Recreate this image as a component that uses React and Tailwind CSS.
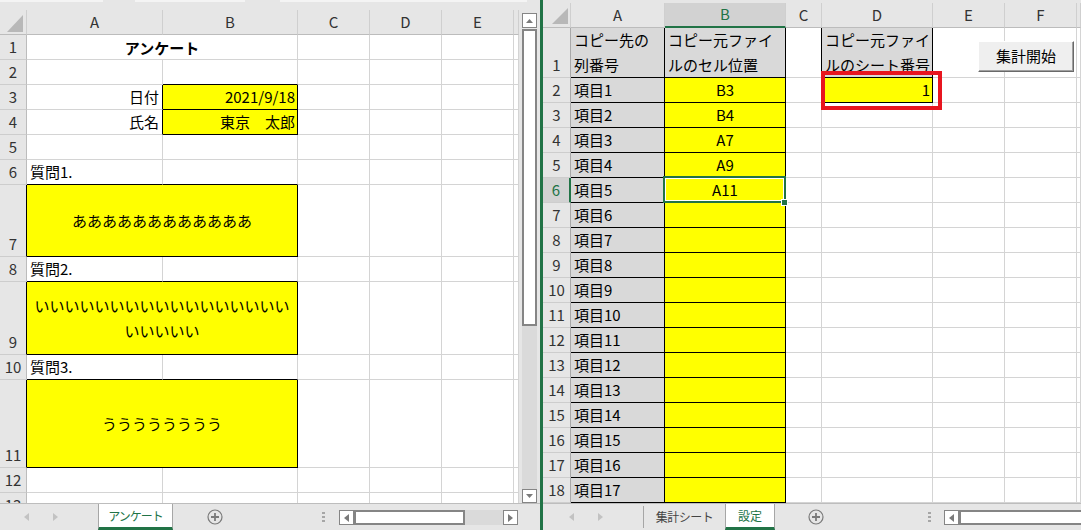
import React from "react";

const FONT = "font-['Noto_Sans_CJK_JP','Noto_Sans',sans-serif]";
const GR = "border-r-[#d4d4d4]";
const GB = "border-b-[#d4d4d4]";
const KR = "border-r-black";
const KB = "border-b-black";
const YEL = "bg-[#ffff00]";
const GRY = "bg-[#d9d9d9]";

// row header styles
const LH = "bg-[#e6e6e6] border-r border-r-[#bcbcbc] text-[#333]";
const LHK = "bg-[#e6e6e6] border-r border-r-black text-[#333]";
const RH = "bg-[#e6e6e6] border-r border-r-[#a8a8a8] text-[#333]";
const RHS = "bg-[#d2d2d2] border-r-2 border-r-[#217346] text-[#217346]";

function Cell({ cls = "", children }) {
  return (
    <div className={`shrink-0 flex border-r border-b text-[15px] leading-[25px] text-black whitespace-nowrap ${cls}`}>
      {children}
    </div>
  );
}

function RowHead({ w, n, cls }) {
  return (
    <div className={`shrink-0 flex items-end justify-center border-b border-b-[#cdcdcd] text-[15px] leading-[25px] ${w} ${cls}`}>
      {n}
    </div>
  );
}

function ColHead({ w, label, cls = "border-b border-b-[#bcbcbc] bg-[#e6e6e6] text-[#333]" }) {
  return (
    <div className={`shrink-0 flex items-center justify-center border-r border-r-[#cfcfcf] text-[15px] ${w} ${cls}`}>
      {label}
    </div>
  );
}

function Corner({ w, points }) {
  return (
    <div className={`shrink-0 bg-[#e6e6e6] border-r border-r-[#cfcfcf] border-b border-b-[#bcbcbc] ${w}`}>
      <svg width="28" height="24" viewBox="0 0 28 24">
        <polygon points={points} fill="#b8b8b8" />
      </svg>
    </div>
  );
}

function Tri({ dir, color = "#c2c2c2" }) {
  const pts = {
    left: "5,0 5,8 0,4",
    right: "0,0 0,8 5,4",
    up: "0,4 7,4 3.5,0",
    down: "0,0 7,0 3.5,4",
  }[dir];
  const vertical = dir === "up" || dir === "down";
  return (
    <svg width={vertical ? 7 : 5} height={vertical ? 4 : 8} viewBox={vertical ? "0 0 7 4" : "0 0 5 8"}>
      <polygon points={pts} fill={color} />
    </svg>
  );
}

function PlusCircle() {
  return (
    <svg width="16" height="16" viewBox="0 0 16 16">
      <circle cx="8" cy="8" r="7" fill="none" stroke="#7a7a7a" strokeWidth="1.2" />
      <path d="M8 4v8M4 8h8" stroke="#7a7a7a" strokeWidth="1.8" />
    </svg>
  );
}

function Dots() {
  return (
    <div className="flex flex-col gap-[2px]">
      <span className="w-[3px] h-[2px] bg-[#a6a6a6]" />
      <span className="w-[3px] h-[2px] bg-[#a6a6a6]" />
      <span className="w-[3px] h-[2px] bg-[#a6a6a6]" />
    </div>
  );
}

function LRow({ h, n, head = LH, children }) {
  return (
    <div className={`flex shrink-0 ${h}`}>
      <RowHead w="w-[27px]" n={n} cls={head} />
      {children}
    </div>
  );
}

function LTail() {
  return (
    <>
      <Cell cls={`w-[72px] ${GR} ${GB}`} />
      <Cell cls={`w-[72px] ${GR} ${GB}`} />
      <Cell cls={`w-[72px] ${GR} ${GB}`} />
      <Cell cls={`w-[5px] ${GR} ${GB}`} />
    </>
  );
}

function LeftWindow() {
  return (
    <div className="w-[540px] shrink-0 flex flex-col">
      <div className="h-[10px] shrink-0 bg-[#e6e6e6] flex items-start">
        <span className="w-[103px] h-[2px] bg-[#f4f4f4]" />
        <span className="w-[32px]" />
        <span className="w-[110px] h-[2px] bg-[#f4f4f4]" />
        <span className="w-[35px]" />
        <span className="w-[247px] h-[2px] bg-[#f4f4f4]" />
      </div>

      <div className="flex h-[493px] shrink-0">
        <div className="w-[519px] h-[493px] overflow-hidden flex flex-col bg-white">
          <div className="flex h-[25px] shrink-0">
            <Corner w="w-[27px]" points="7,22 23,5 23,22" />
            <ColHead w="w-[136px]" label="A" />
            <ColHead w="w-[135px]" label="B" />
            <ColHead w="w-[72px]" label="C" />
            <ColHead w="w-[72px]" label="D" />
            <ColHead w="w-[72px]" label="E" />
            <ColHead w="w-[5px]" label="" />
          </div>

          <LRow h="h-[25px]" n={1}>
            <Cell cls={`w-[271px] ${GR} ${GB} items-center justify-center font-bold`}>アンケート</Cell>
            <LTail />
          </LRow>
          <LRow h="h-[25px]" n={2}>
            <Cell cls={`w-[136px] ${GR} ${GB}`} />
            <Cell cls={`w-[135px] ${GR} ${KB}`} />
            <LTail />
          </LRow>
          <LRow h="h-[25px]" n={3}>
            <Cell cls={`w-[136px] ${KR} ${GB} justify-end items-end pr-[3px]`}>日付</Cell>
            <Cell cls={`w-[135px] ${KR} ${KB} ${YEL} justify-end items-end pr-[2px]`}>2021/9/18</Cell>
            <LTail />
          </LRow>
          <LRow h="h-[25px]" n={4}>
            <Cell cls={`w-[136px] ${KR} ${GB} justify-end items-end pr-[3px]`}>氏名</Cell>
            <Cell cls={`w-[135px] ${KR} ${KB} ${YEL} justify-end items-end pr-[2px]`}>東京　太郎</Cell>
            <LTail />
          </LRow>
          <LRow h="h-[25px]" n={5}>
            <Cell cls={`w-[136px] ${GR} ${GB}`} />
            <Cell cls={`w-[135px] ${GR} ${GB}`} />
            <LTail />
          </LRow>
          <LRow h="h-[25px]" n={6}>
            <Cell cls={`w-[136px] ${GR} ${KB} items-end pl-[3px]`}>質問1.</Cell>
            <Cell cls={`w-[135px] ${GR} ${KB}`} />
            <LTail />
          </LRow>
          <LRow h="h-[72px]" n={7} head={LHK}>
            <Cell cls={`w-[271px] ${KR} ${KB} ${YEL} items-center justify-center`}>ああああああああああああ</Cell>
            <LTail />
          </LRow>
          <LRow h="h-[25px]" n={8}>
            <Cell cls={`w-[136px] ${GR} ${KB} items-end pl-[3px]`}>質問2.</Cell>
            <Cell cls={`w-[135px] ${GR} ${KB}`} />
            <LTail />
          </LRow>
          <LRow h="h-[73px]" n={9} head={LHK}>
            <Cell cls={`w-[271px] ${KR} ${KB} ${YEL} flex-col items-center justify-center`}>
              <span>いいいいいいいいいいいいいいいいい</span>
              <span>いいいいい</span>
            </Cell>
            <LTail />
          </LRow>
          <LRow h="h-[25px]" n={10}>
            <Cell cls={`w-[136px] ${GR} ${KB} items-end pl-[3px]`}>質問3.</Cell>
            <Cell cls={`w-[135px] ${GR} ${KB}`} />
            <LTail />
          </LRow>
          <LRow h="h-[88px]" n={11} head={LHK}>
            <Cell cls={`w-[271px] ${KR} ${KB} ${YEL} items-center justify-center`}>うううううううう</Cell>
            <LTail />
          </LRow>
          <LRow h="h-[25px]" n={12}>
            <Cell cls={`w-[136px] ${GR} ${GB}`} />
            <Cell cls={`w-[135px] ${GR} ${GB}`} />
            <LTail />
          </LRow>
          <LRow h="h-[25px]" n={13}>
            <Cell cls={`w-[136px] ${GR} ${GB}`} />
            <Cell cls={`w-[135px] ${GR} ${GB}`} />
            <LTail />
          </LRow>
        </div>

        {/* vertical scrollbar */}
        <div className="w-[21px] shrink-0 bg-[#e6e6e6] flex flex-col pl-[3px] pr-[3px] pt-[3px]">
          <div className="h-[15px] shrink-0 bg-white border border-[#858585] flex items-center justify-center">
            <Tri dir="up" color="#7a7a7a" />
          </div>
          <div className="h-[297px] shrink-0 mt-[1px] bg-white border-2 border-[#858585]" />
          <div className="flex-1 bg-[#dadada]" />
          <div className="h-[14px] shrink-0 bg-white border border-[#858585] flex items-center justify-center">
            <Tri dir="down" color="#7a7a7a" />
          </div>
        </div>
      </div>

      {/* sheet tabs */}
      <div className="flex h-[27px] shrink-0 bg-[#e6e6e6] border-t border-t-[#bdbdbd]">
        <div className="w-[98px] shrink-0 flex items-center pl-[24px] gap-[24px]">
          <Tri dir="left" />
          <Tri dir="right" />
        </div>
        <div className="w-[75px] shrink-0 bg-white border-x border-[#a6a6a6] border-b-[3px] border-b-[#217346] flex items-center justify-center text-[12px] text-[#217346] tracking-[-1px]">
          アンケート
        </div>
        <div className="ml-[34px] flex items-center">
          <PlusCircle />
        </div>
        <div className="ml-[99px] flex items-center">
          <Dots />
        </div>
        <div className="ml-[14px] w-[179px] h-[15px] mt-[6px] flex">
          <div className="w-[15px] bg-white border border-[#858585] flex items-center justify-center">
            <Tri dir="left" color="#7a7a7a" />
          </div>
          <div className="w-[111px] bg-white border-2 border-[#858585]" />
          <div className="w-[38px] bg-[#dadada]" />
          <div className="w-[15px] bg-white border border-[#858585] flex items-center justify-center">
            <Tri dir="right" color="#7a7a7a" />
          </div>
        </div>
      </div>
    </div>
  );
}

function RRow({ h = "h-[25px]", n, head = RH, children }) {
  return (
    <div className={`flex shrink-0 ${h}`}>
      <RowHead w="w-[28px]" n={n} cls={head} />
      {children}
    </div>
  );
}

function RTail() {
  return (
    <>
      <Cell cls={`w-[72px] ${GR} ${GB}`} />
      <Cell cls={`w-[72px] ${GR} ${GB}`} />
      <Cell cls={`w-[4px] ${GR} ${GB}`} />
    </>
  );
}

const SOURCE = { 2: "B3", 3: "B4", 4: "A7", 5: "A9", 6: "A11" };

function RightWindow() {
  const rows = [];
  for (let n = 2; n <= 18; n++) {
    rows.push(
      <RRow key={n} n={n} head={n === 6 ? RHS : RH}>
        <Cell cls={`w-[94px] ${KR} ${KB} ${GRY} items-end pl-[3px]`}>項目{n - 1}</Cell>
        <Cell cls={`w-[121px] ${KR} ${KB} ${YEL} items-end justify-center relative`}>
          {SOURCE[n]}
          {n === 6 && (
            <>
              <div className="absolute -left-[2px] -top-[2px] w-[123px] h-[27px] border-2 border-[#217346] shadow-[inset_0_0_0_1px_#ffffff] z-10" />
              <div className="absolute left-[116px] top-[21px] w-[7px] h-[7px] bg-[#217346] border border-white z-10" />
            </>
          )}
        </Cell>
        <Cell cls={n === 2 ? `w-[36px] ${KR} ${GB}` : `w-[36px] ${GR} ${GB}`} />
        {n === 2 ? (
          <Cell cls={`w-[111px] ${KR} ${KB} ${YEL} items-end justify-end pr-[2px] relative`}>
            1
            <div className="absolute -left-[1px] -top-[7px] w-[121px] h-[39px] border-4 border-[#e8151f] z-10" />
          </Cell>
        ) : (
          <Cell cls={`w-[111px] ${GR} ${GB}`} />
        )}
        <RTail />
      </RRow>
    );
  }

  return (
    <div className="w-[538px] shrink-0 flex flex-col relative">
      <div className="h-[3px] shrink-0 bg-[#e6e6e6]" />
      <div className="h-[500px] shrink-0 overflow-hidden flex flex-col bg-white">
        <div className="flex h-[25px] shrink-0">
          <Corner w="w-[28px]" points="9,21 25,5 25,21" />
          <ColHead w="w-[94px]" label="A" />
          <ColHead w="w-[121px]" label="B" cls="border-b-2 border-b-[#217346] bg-[#d2d2d2] text-[#217346]" />
          <ColHead w="w-[36px]" label="C" />
          <ColHead w="w-[111px]" label="D" />
          <ColHead w="w-[72px]" label="E" />
          <ColHead w="w-[72px]" label="F" />
          <ColHead w="w-[4px]" label="" />
        </div>

        <RRow h="h-[50px]" n={1}>
          <Cell cls={`w-[94px] ${KR} ${KB} ${GRY} flex-col justify-end pl-[3px]`}>
            <span>コピー先の</span>
            <span>列番号</span>
          </Cell>
          <Cell cls={`w-[121px] ${KR} ${KB} ${GRY} flex-col justify-end pl-[3px]`}>
            <span>コピー元ファイ</span>
            <span>ルのセル位置</span>
          </Cell>
          <Cell cls={`w-[36px] ${KR} ${GB}`} />
          <Cell cls={`w-[111px] ${KR} ${KB} ${GRY} flex-col justify-end pl-[3px]`}>
            <span>コピー元ファイ</span>
            <span>ルのシート番号</span>
          </Cell>
          <RTail />
        </RRow>
        {rows}
      </div>

      <button className="absolute left-[435px] top-[41px] w-[96px] h-[31px] z-20 bg-[#efefef] border border-t-white border-l-white border-r-[#696969] border-b-[#696969] shadow-[inset_-1px_-1px_0_#a0a0a0] flex items-center justify-center text-[15px] text-black">
        集計開始
      </button>

      {/* sheet tabs */}
      <div className="flex h-[27px] shrink-0 bg-[#e6e6e6] border-t border-t-[#bdbdbd]">
        <div className="w-[100px] shrink-0 flex items-center pl-[26px] gap-[24px]">
          <Tri dir="left" />
          <Tri dir="right" />
        </div>
        <div className="w-[82px] shrink-0 border-l border-l-[#a6a6a6] my-[2px] flex items-center justify-center text-[12px] text-[#444] tracking-[-0.5px]">
          集計シート
        </div>
        <div className="w-[50px] shrink-0 bg-white border-x border-[#a6a6a6] border-b-[3px] border-b-[#217346] flex items-center justify-center text-[12px] text-[#217346]">
          設定
        </div>
        <div className="ml-[33px] flex items-center">
          <PlusCircle />
        </div>
        <div className="ml-[104px] flex items-center">
          <Dots />
        </div>
        <div className="ml-[13px] flex-1 h-[15px] mt-[6px] flex">
          <div className="w-[15px] bg-white border border-[#858585] flex items-center justify-center">
            <Tri dir="left" color="#7a7a7a" />
          </div>
          <div className="flex-1 bg-white border-2 border-r-0 border-[#858585]" />
        </div>
      </div>
    </div>
  );
}

export default function App() {
  return (
    <div className={`flex w-[1081px] h-[530px] overflow-hidden bg-white ${FONT}`}>
      <LeftWindow />
      <div className="w-[3px] shrink-0 bg-[#217346]" />
      <RightWindow />
    </div>
  );
}
